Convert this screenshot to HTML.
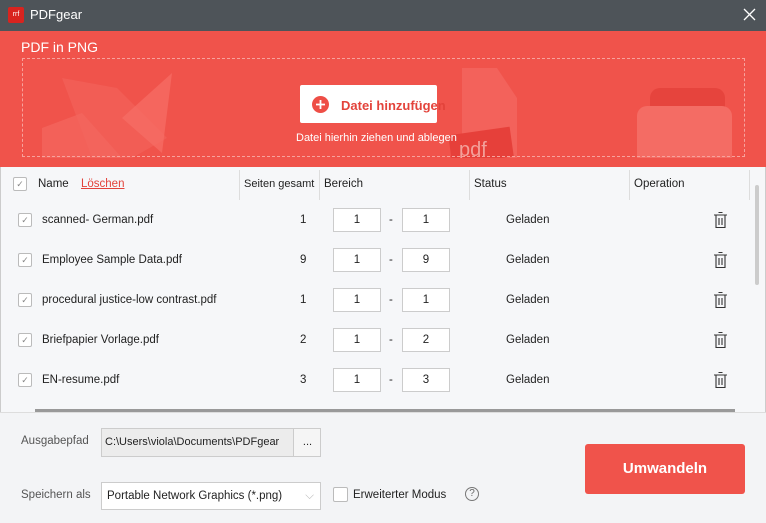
<!DOCTYPE html><html><head><meta charset="utf-8"><style>
*{box-sizing:border-box;margin:0;padding:0}
body{width:766px;height:523px;overflow:hidden;font-family:"Liberation Sans",sans-serif;font-size:11.5px;color:#222;background:#f3f4f6;position:relative}
.a{position:absolute}
.cb{position:absolute;width:14px;height:14px;border:1px solid #bbb;background:#fff;border-radius:2px;font-size:9px;color:#888;text-align:center;line-height:12px}
.inp{position:absolute;width:48px;height:24px;border:1px solid #ccc;background:#fff;text-align:center;line-height:22px}
.tr{position:absolute;left:713px;width:15px;height:18px}
</style></head><body>
<div class="a" style="left:0;top:0;width:766px;height:31px;background:#4e5459"></div>
<div class="a" style="left:8px;top:7px;width:16px;height:16px;background:#d9241f;border-radius:2px;color:#fff;font-size:7px;line-height:16px;text-align:center">rrf</div>
<div class="a" style="left:30px;top:7px;color:#fff;font-size:13px">PDFgear</div>
<svg class="a" style="left:743px;top:8px" width="13" height="13"><path d="M1 1L12 12M12 1L1 12" stroke="#fff" stroke-width="1.3"/></svg>
<div class="a" style="left:0;top:31px;width:766px;height:136px;background:#f0534b"></div>
<div class="a" style="left:21px;top:39px;color:#fff;font-size:14px">PDF in PNG</div>
<svg class="a" style="left:22px;top:58px" width="723" height="100"><polygon points="20,70 60,55 100,100 20,100" fill="#f36860" opacity=".7"/><polygon points="40,20 95,30 145,80 110,100 70,100" fill="#f36760" opacity=".5"/><polygon points="100,60 150,15 140,95" fill="#f66f67" opacity=".7"/><polygon points="440,10 475,10 495,40 495,100 440,100" fill="#f36a62" opacity=".7"/><rect x="428" y="73" width="62" height="30" fill="#e6403a" transform="rotate(-8 458 88)"/><text x="437" y="98" fill="#f3a09a" font-size="20" font-family="Liberation Sans">pdf</text><rect x="628" y="30" width="75" height="70" rx="10" fill="#e6443d"/><rect x="615" y="48" width="95" height="60" rx="10" fill="#f46c64"/></svg>
<div class="a" style="left:22px;top:58px;width:723px;height:99px;border:1px dashed #f7a29d"></div>
<div class="a" style="left:300px;top:85px;width:137px;height:38px;background:#fff;border-radius:2px"></div>
<div class="a" style="left:312px;top:96px;width:17px;height:17px;border-radius:50%;background:#ee4e46"></div>
<svg class="a" style="left:312px;top:96px" width="17" height="17"><path d="M8.5 4V13M4 8.5H13" stroke="#fff" stroke-width="1.8"/></svg>
<div class="a" style="left:341px;top:98px;color:#e3433b;font-size:13px;font-weight:bold">Datei hinzufügen</div>
<div class="a" style="left:296px;top:132px;color:#fff;font-size:11px">Datei hierhin ziehen und ablegen</div>
<div class="a" style="left:0;top:167px;width:766px;height:245px;background:#f6f7f9;border-left:1px solid #ccc;border-right:1px solid #ccc"></div>
<div class="cb" style="left:13px;top:177px">✓</div>
<div class="a" style="left:38px;top:178px">Name</div>
<div class="a" style="left:81px;top:178px;color:#e3433b;text-decoration:underline">Löschen</div>
<div class="a" style="left:244px;top:178px;font-size:11px">Seiten gesamt</div>
<div class="a" style="left:324px;top:178px">Bereich</div>
<div class="a" style="left:474px;top:178px">Status</div>
<div class="a" style="left:634px;top:178px">Operation</div>
<div class="a" style="left:239px;top:170px;width:1px;height:30px;background:#ddd"></div>
<div class="a" style="left:319px;top:170px;width:1px;height:30px;background:#ddd"></div>
<div class="a" style="left:469px;top:170px;width:1px;height:30px;background:#ddd"></div>
<div class="a" style="left:629px;top:170px;width:1px;height:30px;background:#ddd"></div>
<div class="a" style="left:749px;top:170px;width:1px;height:30px;background:#ddd"></div>
<div class="a" style="left:755px;top:185px;width:4px;height:100px;background:#ccc;border-radius:2px"></div>
<div class="a" style="left:35px;top:409px;width:700px;height:3px;background:#999"></div>
<div class="a" style="left:0;top:412px;width:766px;height:1px;background:#ddd"></div>
<svg width="0" height="0" style="position:absolute"><defs><symbol id="t" viewBox="0 0 15 18"><path d="M5.5 1.5H9.5M1 4H14M3 4V16.5H12V4M6 7V14M9 7V14" stroke="#333" stroke-width="1.1" fill="none"/></symbol></defs></svg>
<div class="cb" style="left:18px;top:213px">✓</div><div class="a" style="left:42px;top:214px">scanned- German.pdf</div><div class="a" style="left:300px;top:214px">1</div><div class="inp" style="left:333px;top:208px">1</div><div class="a" style="left:389px;top:214px">-</div><div class="inp" style="left:402px;top:208px">1</div><div class="a" style="left:506px;top:214px">Geladen</div><svg class="tr" style="top:211px"><use href="#t"/></svg>
<div class="cb" style="left:18px;top:253px">✓</div><div class="a" style="left:42px;top:254px">Employee Sample Data.pdf</div><div class="a" style="left:300px;top:254px">9</div><div class="inp" style="left:333px;top:248px">1</div><div class="a" style="left:389px;top:254px">-</div><div class="inp" style="left:402px;top:248px">9</div><div class="a" style="left:506px;top:254px">Geladen</div><svg class="tr" style="top:251px"><use href="#t"/></svg>
<div class="cb" style="left:18px;top:293px">✓</div><div class="a" style="left:42px;top:294px">procedural justice-low contrast.pdf</div><div class="a" style="left:300px;top:294px">1</div><div class="inp" style="left:333px;top:288px">1</div><div class="a" style="left:389px;top:294px">-</div><div class="inp" style="left:402px;top:288px">1</div><div class="a" style="left:506px;top:294px">Geladen</div><svg class="tr" style="top:291px"><use href="#t"/></svg>
<div class="cb" style="left:18px;top:333px">✓</div><div class="a" style="left:42px;top:334px">Briefpapier Vorlage.pdf</div><div class="a" style="left:300px;top:334px">2</div><div class="inp" style="left:333px;top:328px">1</div><div class="a" style="left:389px;top:334px">-</div><div class="inp" style="left:402px;top:328px">2</div><div class="a" style="left:506px;top:334px">Geladen</div><svg class="tr" style="top:331px"><use href="#t"/></svg>
<div class="cb" style="left:18px;top:373px">✓</div><div class="a" style="left:42px;top:374px">EN-resume.pdf</div><div class="a" style="left:300px;top:374px">3</div><div class="inp" style="left:333px;top:368px">1</div><div class="a" style="left:389px;top:374px">-</div><div class="inp" style="left:402px;top:368px">3</div><div class="a" style="left:506px;top:374px">Geladen</div><svg class="tr" style="top:371px"><use href="#t"/></svg>
<div class="a" style="left:21px;top:435px;color:#555">Ausgabepfad</div>
<div class="a" style="left:101px;top:428px;width:220px;height:29px;border:1px solid #ccc;background:#ececec;line-height:27px;padding-left:3px;overflow:hidden;white-space:nowrap;font-size:11px">C:\Users\viola\Documents\PDFgear<span style="position:absolute;left:191px;top:0;width:28px;height:27px;background:#f5f5f5;border-left:1px solid #ccc;text-align:center">...</span></div>
<div class="a" style="left:21px;top:489px;color:#555">Speichern als</div>
<div class="a" style="left:101px;top:482px;width:220px;height:28px;border:1px solid #ccc;background:#fff;line-height:26px;padding-left:5px">Portable Network Graphics (*.png)<span style="position:absolute;right:6px;color:#bbb">⌵</span></div>
<div class="a" style="left:333px;top:487px;width:15px;height:15px;border:1px solid #bbb;background:#fff;border-radius:2px"></div>
<div class="a" style="left:353px;top:489px">Erweiterter Modus</div>
<div class="a" style="left:465px;top:487px;width:14px;height:14px;border:1px solid #777;border-radius:50%;font-size:10px;text-align:center;line-height:12px;color:#666">?</div>
<div class="a" style="left:585px;top:444px;width:160px;height:50px;background:#f0534b;border-radius:3px;color:#fff;font-size:15px;font-weight:bold;text-align:center;line-height:50px">Umwandeln</div>
</body></html>
